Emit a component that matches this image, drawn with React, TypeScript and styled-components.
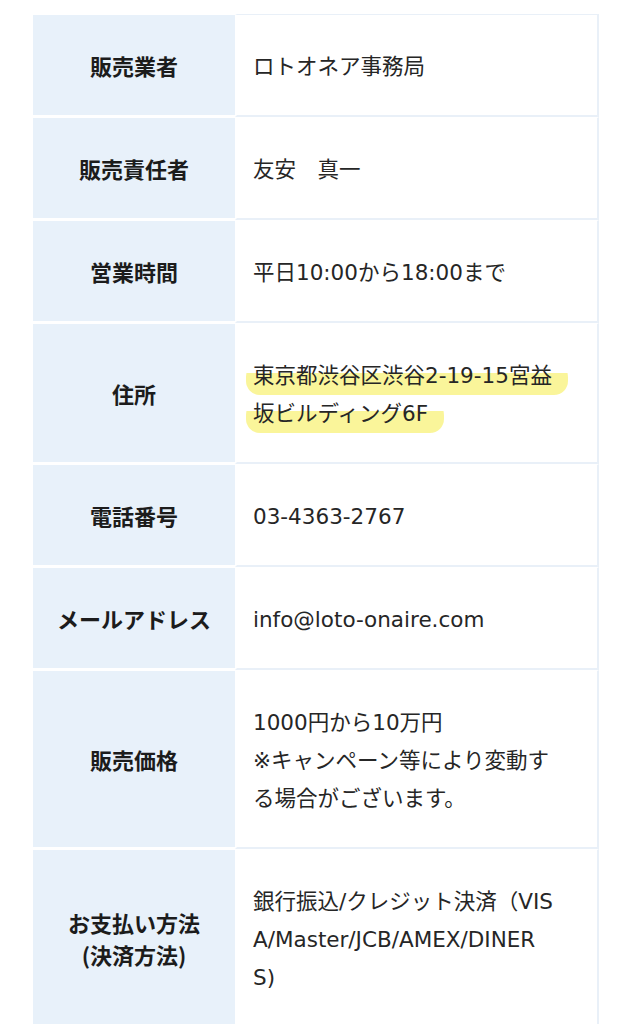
import React from 'react'
import styled, { createGlobalStyle } from 'styled-components'

const GlobalStyle = createGlobalStyle`
  body {
    margin: 0;
    background: #fff;
    font-family: "DejaVu Sans", "Noto Sans CJK JP", sans-serif;
  }
`

// each value is given line by line, as it wraps in the original
type Row = { label: string[]; value: string[]; mark?: boolean }

const rows: Row[] = [
  { label: ['販売業者'], value: ['ロトオネア事務局'] },
  { label: ['販売責任者'], value: ['友安\u3000真一'] },
  { label: ['営業時間'], value: ['平日10:00から18:00まで'] },
  { label: ['住所'], value: ['東京都渋谷区渋谷2-19-15宮益', '坂ビルディング6F'], mark: true },
  { label: ['電話番号'], value: ['03-4363-2767'] },
  { label: ['メールアドレス'], value: ['info@loto-onaire.com'] },
  {
    label: ['販売価格'],
    value: ['1000円から10万円', '※キャンペーン等により変動す', 'る場合がございます。'],
  },
  {
    label: ['お支払い方法', '(決済方法)'],
    value: ['銀行振込/クレジット決済（VIS', 'A/Master/JCB/AMEX/DINER', 'S)'],
  },
]

const lines = (arr: string[]) =>
  arr.map((t, i) => (
    <React.Fragment key={i}>
      {i > 0 && <br />}
      {t}
    </React.Fragment>
  ))

function App() {
  return (
    <>
      <GlobalStyle />
      <Page>
        <Table>
          <tbody>
            {rows.map((r, i) => (
              <tr key={i}>
                <Label>{lines(r.label)}</Label>
                <Value $first={i === 0}>
                  {r.mark ? <Marker>{lines(r.value)}</Marker> : lines(r.value)}
                </Value>
              </tr>
            ))}
          </tbody>
        </Table>
      </Page>
    </>
  )
}

export default App

const Page = styled.div`
  padding: 14px 32px 0 33px;
`

const Table = styled.table`
  width: 566px;
  border-collapse: separate;
  border-spacing: 0;
  table-layout: fixed;
`

const Label = styled.th`
  box-sizing: border-box;
  width: 202px;
  background: #e8f1fa;
  border-bottom: 2px solid #fff;
  border-top: 1px solid #fff;
  color: #1c1c1c;
  font-family: "Noto Sans CJK JP", sans-serif;
  font-size: 22px;
  font-weight: 700;
  line-height: 32px;
  text-align: center;
  vertical-align: middle;
  padding: 0 4px;
`

const Value = styled.td<{ $first?: boolean }>`
  border-left: 2px solid #fff;
  border-right: 2px solid #e9f0f8;
  border-bottom: 2px solid #e9f0f8;
  border-top: ${(p) => (p.$first ? '1px solid #e9f0f8' : '1px solid #fff')};
  padding: 33px 0 29px 16px;
  color: #262626;
  font-size: 21.5px;
  line-height: 38px;
  white-space: nowrap;
  vertical-align: middle;
`

const Marker = styled.span`
  background: linear-gradient(transparent 30%, #faf59a 30%);
  border-radius: 14px;
  padding: 0 16px 7px 7px;
  margin-left: -7px;
  -webkit-box-decoration-break: clone;
  box-decoration-break: clone;
`
